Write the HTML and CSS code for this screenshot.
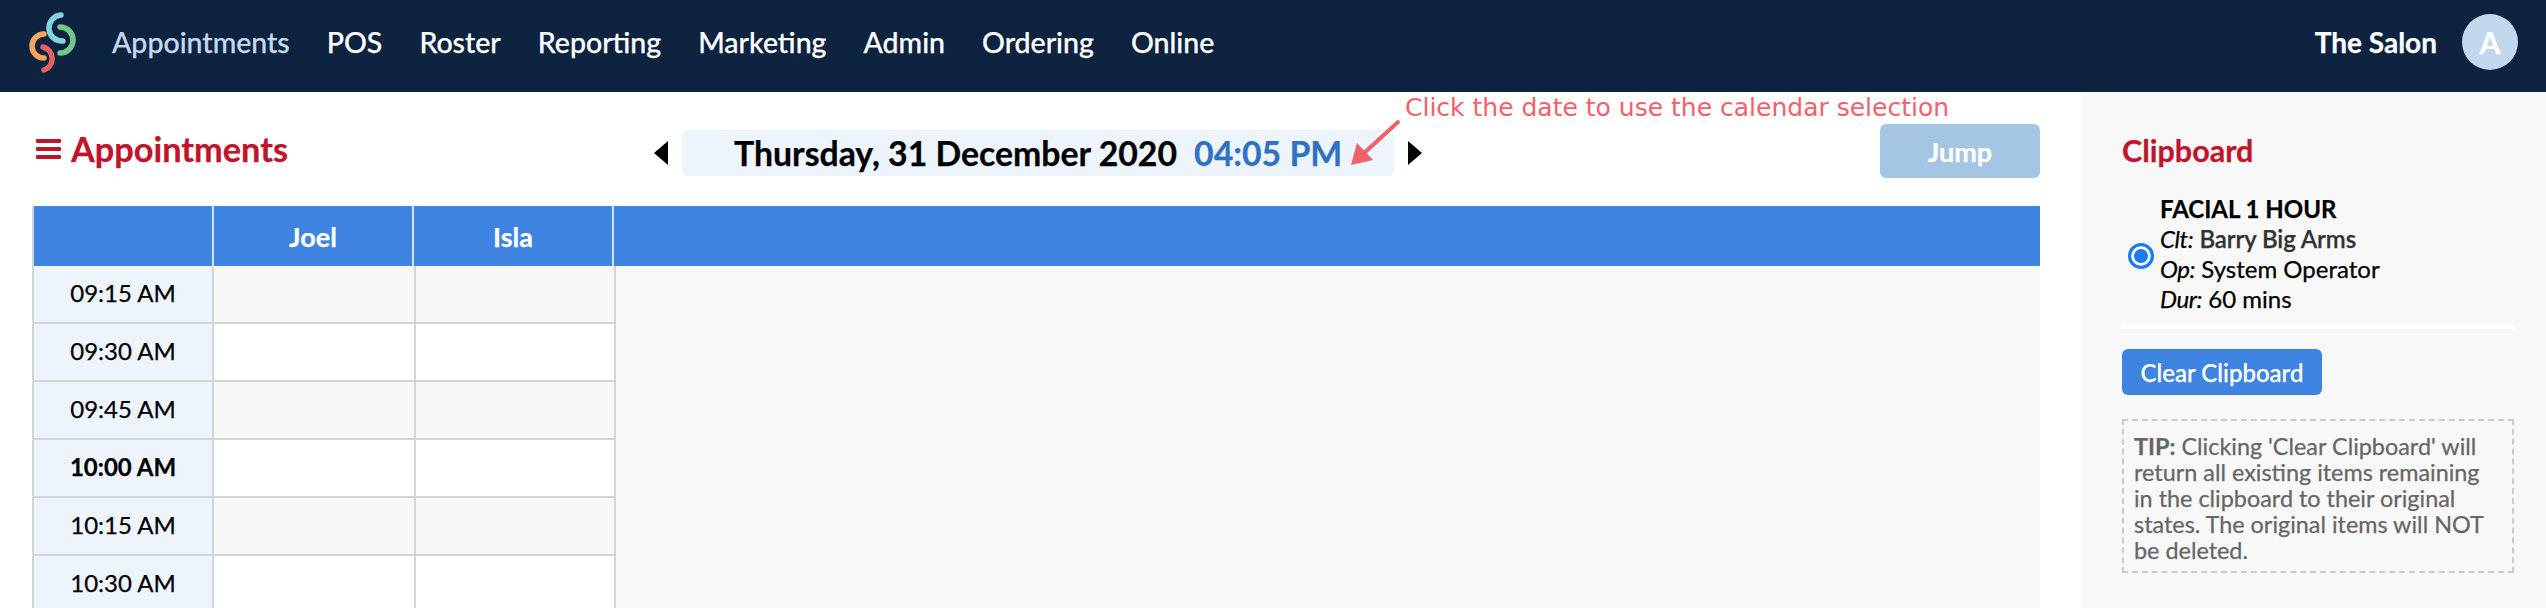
FILE: index.html
```html
<!DOCTYPE html>
<html lang="en">
<head>
<meta charset="utf-8">
<title>Appointments</title>
<link rel="stylesheet" href="styles.css">
</head>
<body>
<header class="topbar">
  <svg class="logo" width="112" height="84" viewBox="0 0 112 84" fill="none" stroke-width="5.5" stroke-linecap="round">
    <path d="M61 15 A13 13 0 0 0 63 41" stroke="#7fd6e0"/>
    <path d="M60 27 A13 13 0 0 1 60 53" stroke="#6fc98a"/>
    <path d="M44 34 A12 12 0 0 0 44 58" stroke="#f5a65b"/>
    <path d="M43 47 A12 12 0 0 1 44 70" stroke="#ea5f5f"/>
  </svg>
  <nav class="nav">
    <a class="nav-item active">Appointments</a>
    <a class="nav-item">POS</a>
    <a class="nav-item">Roster</a>
    <a class="nav-item">Reporting</a>
    <a class="nav-item">Marketing</a>
    <a class="nav-item">Admin</a>
    <a class="nav-item">Ordering</a>
    <a class="nav-item">Online</a>
  </nav>
  <div class="account">
    <span class="salon">The Salon</span>
    <span class="avatar">A</span>
  </div>
</header>
<div class="page">
  <main class="content">
    <div class="toolbar">
      <h1 class="title">
        <svg class="burger" width="25" height="20" viewBox="0 0 25 20" fill="#c0142c"><rect y="0" width="25" height="4" rx="1"/><rect y="8" width="25" height="4" rx="1"/><rect y="16" width="25" height="4" rx="1"/></svg>
        Appointments
      </h1>
      <div class="date-nav">
        <svg class="tri" width="14" height="24" viewBox="0 0 14 24"><path d="M14 0 V24 L0 12 Z" fill="#000"/></svg>
        <div class="date-box"><span class="date">Thursday, 31 December 2020</span><span class="time">04:05 PM</span></div>
        <svg class="tri" width="14" height="24" viewBox="0 0 14 24"><path d="M0 0 V24 L14 12 Z" fill="#000"/></svg>
        <span class="note">Click the date to use the calendar selection</span>
        <svg class="note-arrow" width="60" height="60" viewBox="0 0 60 60"><path d="M51 4 L16 36" stroke="#f2606a" stroke-width="4" stroke-linecap="round"/><path d="M4 47 L10 25 L26 42 Z" fill="#f2606a"/></svg>
      </div>
      <button class="jump">Jump</button>
    </div>
    <section class="cal">
      <div class="cal-head">
        <div class="head-cell"></div>
        <div class="head-cell">Joel</div>
        <div class="head-cell">Isla</div>
      </div>
      <div class="cal-row off"><div class="t">09:15 AM</div><div class="c"></div><div class="c"></div></div>
      <div class="cal-row"><div class="t">09:30 AM</div><div class="c"></div><div class="c"></div></div>
      <div class="cal-row off"><div class="t">09:45 AM</div><div class="c"></div><div class="c"></div></div>
      <div class="cal-row"><div class="t hour">10:00 AM</div><div class="c"></div><div class="c"></div></div>
      <div class="cal-row off"><div class="t">10:15 AM</div><div class="c"></div><div class="c"></div></div>
      <div class="cal-row"><div class="t">10:30 AM</div><div class="c"></div><div class="c"></div></div>
    </section>
  </main>
  <aside class="side">
    <h2 class="side-title">Clipboard</h2>
    <div class="clip">
      <span class="radio"></span>
      <div class="clip-text">
        <div class="clip-name">FACIAL 1 HOUR</div>
        <div><em>Clt:</em> <span class="client">Barry Big Arms</span></div>
        <div><em>Op:</em> System Operator</div>
        <div><em>Dur:</em> 60 mins</div>
      </div>
    </div>
    <hr class="rule">
    <button class="clear">Clear Clipboard</button>
    <p class="tip"><b>TIP:</b> Clicking 'Clear Clipboard' will return all existing items remaining in the clipboard to their original states. The original items will NOT be deleted.</p>
  </aside>
</div>
</body>
</html>
```
FILE: styles.css
```css
* { box-sizing: border-box; }
html, body { margin: 0; height: 608px; overflow: hidden; }
body { font-family: Lato, "Open Sans", sans-serif; background: #fff; color: #000; -webkit-text-stroke: 0.25px; }

.topbar { display: flex; align-items: center; height: 92px; background: #0e2340; color: #fff; padding: 0 28px 8px 0; }
.logo { flex: none; }
.nav { display: flex; gap: 37px; font-size: 28.5px; font-weight: 500; }
.nav-item.active { color: #c2d9ed; }
.account { margin-left: auto; display: flex; align-items: center; gap: 25px; }
.salon { font-size: 28px; font-weight: 700; }
.avatar { width: 56px; height: 56px; border-radius: 50%; background: #c2d9ed; display: flex; align-items: center; justify-content: center; font-size: 30px; font-weight: 700; }

.page { display: flex; height: 516px; }
.content { width: 2082px; flex: none; padding: 32px 42px 0 32px; }
.toolbar { display: grid; grid-template-columns: 1fr auto 1fr; align-items: center; height: 54px; margin-bottom: 28px; }
.title { margin: -4px 0 0; padding-left: 4px; display: flex; align-items: center; gap: 10px; font-size: 34.3px; font-weight: 700; color: #c0142c; line-height: 1; }
.burger { flex: none; }
.date-nav { position: relative; display: flex; align-items: center; gap: 14px; margin: 4px 0 0 4px; }
.date-box { width: 712px; height: 46px; background: #edf4fb; border-radius: 6px; display: flex; align-items: center; padding: 0 0 1px 52px; gap: 17px; font-size: 33.8px; font-weight: 700; }
.time { color: #2f72c4; }
.note { position: absolute; left: 751px; top: -38px; white-space: nowrap; font-family: "DejaVu Sans", sans-serif; font-size: 25px; line-height: 32px; color: #f2606a; -webkit-text-stroke: 0; }
.note-arrow { position: absolute; left: 693px; top: -12px; }
.jump { justify-self: end; width: 160px; height: 54px; border: 0; border-radius: 6px; background: #a4c6e3; color: #fff; font: 700 27px Lato, sans-serif; }

.cal { height: 402px; background: #f8f8f8; border-left: 2px solid #d5d5d5; }
.cal-head { display: grid; grid-template-columns: 180px 200px 200px; height: 60px; background: #3e84e0; }
.head-cell { height: 60px; display: flex; align-items: center; justify-content: center; color: #fff; font-size: 27px; font-weight: 700; border-right: 2px solid #d5e2f3; }
.cal-row { display: grid; grid-template-columns: 180px 202px 200px; width: 582px; height: 58px; border-bottom: 2px solid #d5d5d5; background: #fff; }
.cal-row.off { background: #f7f7f7; }
.t { background: #edf4fb; display: flex; align-items: center; justify-content: center; font-size: 24px; padding-bottom: 3px; border-right: 2px solid #d5d5d5; }
.t.hour { font-weight: 700; }
.c { border-right: 2px solid #d5d5d5; }

.side { flex: 1; background: #f8f8f8; padding: 40px 32px 0 40px; }
.side-title { margin: 0 0 26px; font-size: 30.5px; font-weight: 700; color: #c0142c; line-height: 36px; }
.clip { display: flex; align-items: center; gap: 6px; padding-left: 6px; }
.radio { flex: none; width: 26px; height: 26px; border-radius: 50%; border: 3px solid #1a7cf5; background: #1a7cf5; box-shadow: inset 0 0 0 3px #fff; margin-top: 4px; }
.clip-text { font-size: 24px; line-height: 30px; }
.clip-text em { letter-spacing: -0.4px; }
.clip-name { font-weight: 700; }
.client { color: #333; font-weight: 600; letter-spacing: -0.1px; }
.rule { border: 0; height: 4px; background: #fff; margin: 11px 0 20px; }
.clear { display: block; width: 200px; height: 46px; border: 0; border-radius: 6px; background: #3e84e0; color: #fff; font: 500 24px Lato, sans-serif; }
.tip { margin: 24px 0 0; height: 154px; border: 2px dashed #ccc; padding: 12px 10px; font-size: 23.4px; line-height: 26px; color: #666; }
```
